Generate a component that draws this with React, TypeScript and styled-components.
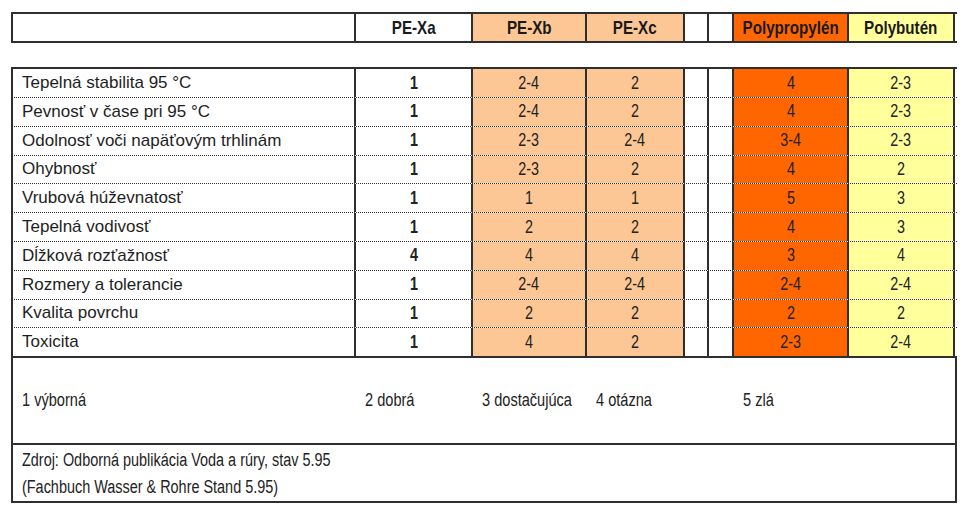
import React from "react";
import styled, { createGlobalStyle, css } from "styled-components";

const GlobalStyle = createGlobalStyle`
  html, body { margin: 0; padding: 0; background: #fff; }
  body { font-family: "Liberation Sans", Arial, sans-serif; color: #1e1e1e; }
`;

const COLS = "343px 117px 114px 98px 24px 25px 115px 108px";
const LINE = "#2e2e2e";

const narrow = (origin: "left" | "center") => css`
  font-family: "Liberation Sans", Arial, sans-serif;
  display: inline-block;
  transform: scaleX(0.82);
  transform-origin: ${origin} center;
`;

type Tone = "white" | "peach" | "orange" | "yellow";
const toneBg: Record<Tone, string> = {
  white: "#ffffff",
  peach: "#fcc795",
  orange: "#ff6600",
  yellow: "#ffff9b",
};

const Page = styled.div`
  padding: 12px 0 0 11px;
  width: 946px;
`;

const GridRow = styled.div<{ $h: number; $dotted?: boolean }>`
  display: grid;
  grid-template-columns: ${COLS};
  height: ${(p) => p.$h}px;
  box-sizing: border-box;
  border-top: ${(p) => (p.$dotted ? `1px dotted ${LINE}` : "none")};
`;

const HeaderTable = styled.div`
  border-top: 2px solid ${LINE};
  border-bottom: 2px solid ${LINE};
  margin-bottom: 24px;
`;

const DataTable = styled.div`
  border-top: 2px solid ${LINE};
  border-bottom: 2px solid ${LINE};
`;

const Cell = styled.div<{ $tone: Tone; $last?: boolean; $align?: "left" | "center" }>`
  box-sizing: border-box;
  background: ${(p) => toneBg[p.$tone]};
  border-left: 2px solid ${LINE};
  border-right: ${(p) => (p.$last ? `2px solid ${LINE}` : "none")};
  display: flex;
  align-items: center;
  justify-content: ${(p) => (p.$align === "left" ? "flex-start" : "center")};
  padding-left: ${(p) => (p.$align === "left" ? "9px" : "0")};
  overflow: hidden;
  white-space: nowrap;
`;

const HeadText = styled.span`
  ${narrow("center")}
  font-weight: bold;
  font-size: 18.5px;
  color: #1a1a1a;
`;

const Label = styled.span`
  font-family: "Liberation Sans", Arial, sans-serif;
  font-size: 17px;
  color: #1e1e1e;
`;

const Value = styled.span<{ $bold?: boolean }>`
  ${narrow("center")}
  font-weight: ${(p) => (p.$bold ? "bold" : "normal")};
  font-size: 17.5px;
  color: #222;
`;

const Notes = styled.div`
  border-left: 2px solid ${LINE};
  border-right: 2px solid ${LINE};
  border-bottom: 2px solid ${LINE};
  box-sizing: border-box;
  width: 946px;
`;

const LegendRow = styled.div`
  display: grid;
  grid-template-columns: ${COLS};
  height: 85px;
  align-items: center;
  border-bottom: 2px solid ${LINE};
  margin-left: -2px;
`;

const LegendItem = styled.span<{ $span?: number }>`
  grid-column: span ${(p) => p.$span ?? 1};
  padding-left: 11px;
  white-space: nowrap;
`;

const LegendText = styled.span`
  ${narrow("left")}
  font-size: 17.8px;
  color: #222;
`;

const Source = styled.div`
  height: 56px;
  padding: 2px 0 0 9px;
  box-sizing: border-box;
`;

const SourceLine = styled.div`
  line-height: 27px;
  white-space: nowrap;
`;

const SourceText = styled.span`
  ${narrow("left")}
  font-size: 17.6px;
  color: #222;
`;

const tones: Tone[] = ["white", "white", "peach", "peach", "white", "white", "orange", "yellow"];

const headers = ["", "PE-Xa", "PE-Xb", "PE-Xc", "", "", "Polypropylén", "Polybutén"];

const rows: [string, string, string, string, string, string][] = [
  ["Tepelná stabilita 95 °C", "1", "2-4", "2", "4", "2-3"],
  ["Pevnosť v čase pri 95 °C", "1", "2-4", "2", "4", "2-3"],
  ["Odolnosť voči napäťovým trhlinám", "1", "2-3", "2-4", "3-4", "2-3"],
  ["Ohybnosť", "1", "2-3", "2", "4", "2"],
  ["Vrubová húževnatosť", "1", "1", "1", "5", "3"],
  ["Tepelná vodivosť", "1", "2", "2", "4", "3"],
  ["Dĺžková rozťažnosť", "4", "4", "4", "3", "4"],
  ["Rozmery a tolerancie", "1", "2-4", "2-4", "2-4", "2-4"],
  ["Kvalita povrchu", "1", "2", "2", "2", "2"],
  ["Toxicita", "1", "4", "2", "2-3", "2-4"],
];

const legend: [string, number][] = [
  ["1 výborná", 1],
  ["2 dobrá", 1],
  ["3 dostačujúca", 1],
  ["4 otázna", 3],
  ["5 zlá", 2],
];

export default function App() {
  return (
    <>
      <GlobalStyle />
      <Page>
        <HeaderTable>
          <GridRow $h={27}>
            {headers.map((h, i) => (
              <Cell key={i} $tone={tones[i]} $last={i === 7}>
                {h && <HeadText>{h}</HeadText>}
              </Cell>
            ))}
          </GridRow>
        </HeaderTable>
        <DataTable>
          {rows.map((r, ri) => {
            const cells = [r[0], r[1], r[2], r[3], "", "", r[4], r[5]];
            return (
              <GridRow key={ri} $h={ri === 0 ? 28 : 28.8} $dotted={ri > 0}>
                {cells.map((c, i) => (
                  <Cell key={i} $tone={tones[i]} $last={i === 7} $align={i === 0 ? "left" : "center"}>
                    {i === 0 ? <Label>{c}</Label> : c && <Value $bold={i === 1}>{c}</Value>}
                  </Cell>
                ))}
              </GridRow>
            );
          })}
        </DataTable>
        <Notes>
          <LegendRow>
            {legend.map(([t, span]) => (
              <LegendItem key={t} $span={span}>
                <LegendText>{t}</LegendText>
              </LegendItem>
            ))}
          </LegendRow>
          <Source>
            <SourceLine>
              <SourceText>Zdroj: Odborná publikácia Voda a rúry, stav 5.95</SourceText>
            </SourceLine>
            <SourceLine>
              <SourceText>(Fachbuch Wasser &amp; Rohre Stand 5.95)</SourceText>
            </SourceLine>
          </Source>
        </Notes>
      </Page>
    </>
  );
}
